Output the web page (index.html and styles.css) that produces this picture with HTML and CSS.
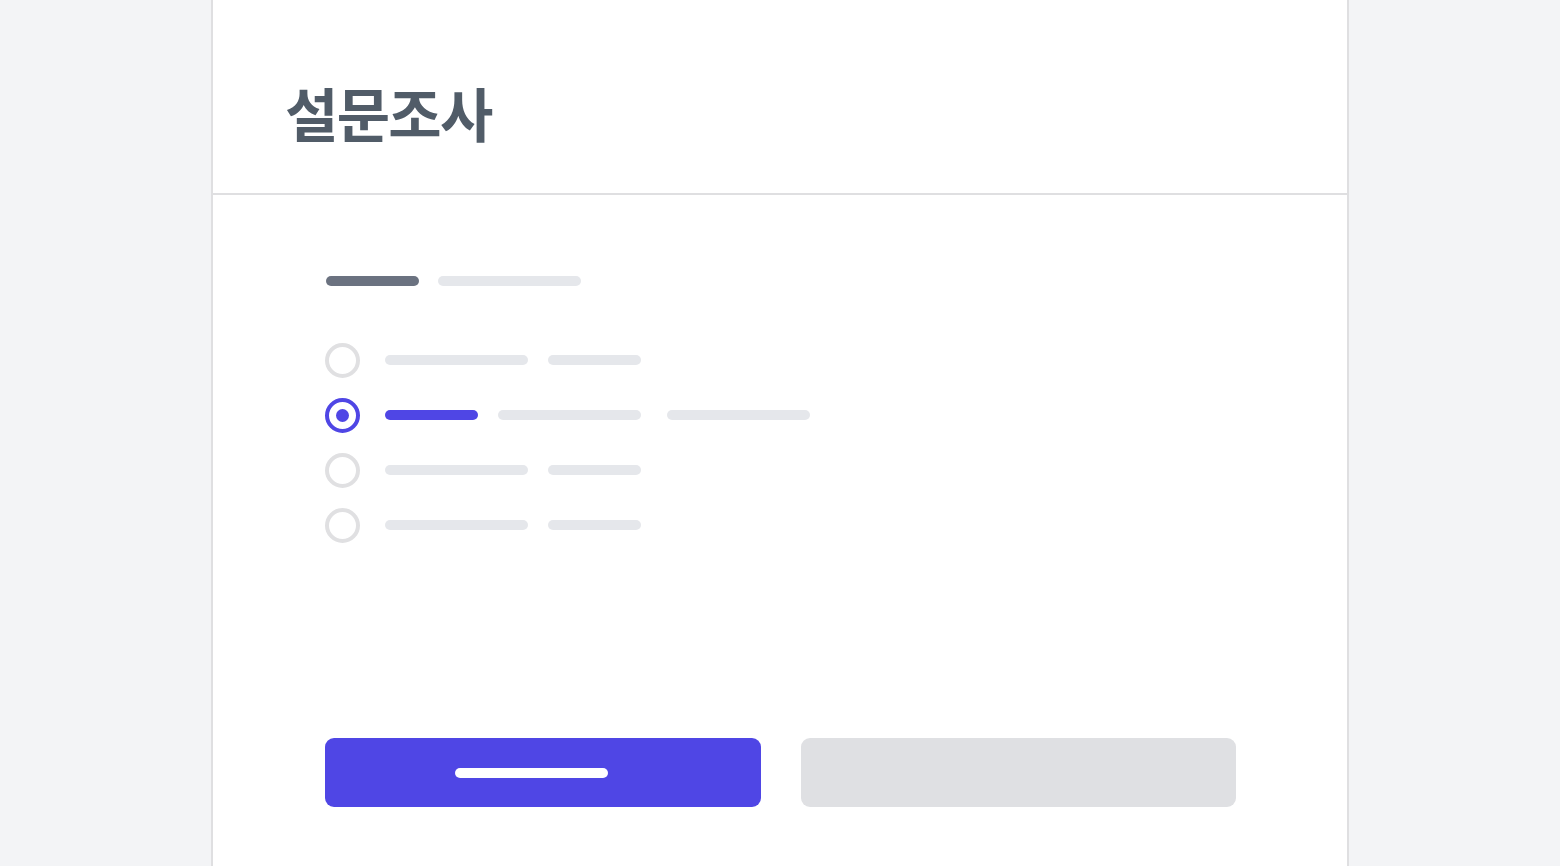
FILE: index.html
```html
<!DOCTYPE html>
<html lang="ko">
<head>
<meta charset="utf-8">
<title>설문조사</title>
<link rel="stylesheet" href="styles.css">
</head>
<body>
<div class="card">
  <header class="head">
    <h1 class="title">설문조사</h1>
  </header>
  <main class="body">
    <div class="question">
      <span class="bar dark w93"></span>
      <span class="bar light w143"></span>
    </div>
    <ul class="options">
      <li class="option">
        <span class="radio"></span>
        <span class="bar light w143"></span>
        <span class="bar light w93"></span>
      </li>
      <li class="option selected">
        <span class="radio"><span class="dot"></span></span>
        <span class="bar accent w93"></span>
        <span class="bar light w143"></span>
        <span class="bar light w143 extra"></span>
      </li>
      <li class="option">
        <span class="radio"></span>
        <span class="bar light w143"></span>
        <span class="bar light w93"></span>
      </li>
      <li class="option">
        <span class="radio"></span>
        <span class="bar light w143"></span>
        <span class="bar light w93"></span>
      </li>
    </ul>
    <div class="actions">
      <button class="btn primary"><span class="btn-bar"></span></button>
      <button class="btn secondary"></button>
    </div>
  </main>
</div>
</body>
</html>
```
FILE: styles.css
```css
* { box-sizing: border-box; }
html, body { margin: 0; padding: 0; }
body {
  background: #f3f4f6;
  font-family: "Noto Sans CJK KR", "Noto Sans", sans-serif;
  height: 866px;
  overflow: hidden;
}
.card {
  width: 1138px;
  margin: 0 auto;
  background: #ffffff;
  border-left: 2px solid #dfdfe1;
  border-right: 2px solid #dfdfe1;
  min-height: 866px;
}
.head {
  height: 195px;
  border-bottom: 2px solid #dfdfe1;
  padding: 0 72px;
  display: flex;
  align-items: flex-start;
}
.title {
  margin: 0;
  padding-top: 83px;
  font-size: 58px;
  line-height: 1;
  font-weight: 700;
  color: #515c68;
  letter-spacing: -1.7px;
}
.body {
  padding: 81px 111px 0 112px;
}
.question {
  display: flex;
  align-items: center;
  gap: 19px;
  height: 10px;
  margin-left: 1px;
}
.bar {
  display: block;
  height: 10px;
  border-radius: 5px;
  flex: none;
}
.bar.dark { background: #6b7280; }
.bar.light { background: #e5e7eb; }
.bar.accent { background: #4f46e5; }
.w93 { width: 93px; }
.w143 { width: 143px; }
.options {
  list-style: none;
  margin: 57px 0 0 0;
  padding: 0;
  display: flex;
  flex-direction: column;
  gap: 20px;
}
.option {
  display: flex;
  align-items: center;
  gap: 20px;
  height: 35px;
}
.radio {
  width: 35px;
  height: 35px;
  border-radius: 50%;
  border: 4px solid #e0e0e2;
  display: flex;
  align-items: center;
  justify-content: center;
  margin-right: 5px;
  flex: none;
}
.option .bar { margin-top: -1px; }
.selected .radio { border-color: #4f46e5; }
.dot {
  width: 13px;
  height: 13px;
  border-radius: 50%;
  background: #4f46e5;
}
.option .extra { margin-left: 6px; }
.actions {
  margin-top: 195px;
  display: flex;
  gap: 40px;
}
.btn {
  flex: 1;
  height: 69px;
  border: none;
  border-radius: 9px;
  padding: 0;
  display: flex;
  align-items: center;
  justify-content: center;
}
.primary { background: #4f46e5; }
.secondary { background: #dfe0e3; }
.btn-bar {
  display: block;
  width: 153px;
  height: 10px;
  border-radius: 5px;
  background: #ffffff;
  margin-right: 22px;
}
```
